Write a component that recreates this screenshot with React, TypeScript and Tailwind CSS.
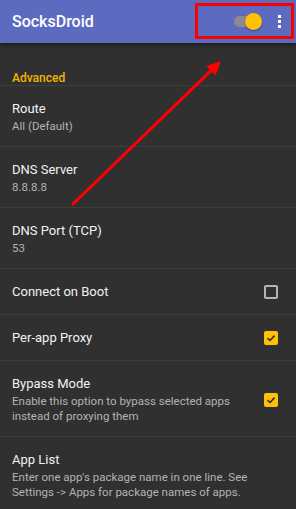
import React from "react";

type Pref = {
  title: string;
  summary?: string;
  checked?: boolean;
};

const prefs: Pref[] = [
  { title: "Route", summary: "All (Default)" },
  { title: "DNS Server", summary: "8.8.8.8" },
  { title: "DNS Port (TCP)", summary: "53" },
  { title: "Connect on Boot", checked: false },
  { title: "Per-app Proxy", checked: true },
  {
    title: "Bypass Mode",
    summary: "Enable this option to bypass selected apps instead of proxying them",
    checked: true,
  },
  {
    title: "App List",
    summary:
      "Enter one app's package name in one line. See Settings -> Apps for package names of apps.",
  },
];

function CheckBox({ checked }: { checked: boolean }) {
  if (!checked) {
    return <div className="w-[14px] h-[14px] rounded-[2px] border-2 border-[#b5b5b5] shrink-0" />;
  }
  return (
    <div className="w-[14px] h-[14px] rounded-[2px] bg-[#ffc107] shrink-0 flex items-center justify-center">
      <svg width="10" height="10" viewBox="0 0 10 10">
        <path d="M1.5 5.2 L4 7.5 L8.6 2.6" fill="none" stroke="#303030" strokeWidth="1.6" />
      </svg>
    </div>
  );
}

function PrefRow({ pref }: { pref: Pref }) {
  const hasBox = pref.checked !== undefined;
  if (!pref.summary) {
    return (
      <div className="h-[46px] flex items-center pl-3 pr-[18px] border-b border-[#3e3e3e]">
        <div className="flex-1 text-[13px] leading-[18px] text-[#f2f2f2]">{pref.title}</div>
        {hasBox && <CheckBox checked={!!pref.checked} />}
      </div>
    );
  }
  return (
    <div className="flex items-center pl-3 pr-[18px] pt-[14px] pb-[12px] border-b border-[#3e3e3e]">
      <div className="flex-1 pr-6">
        <div className="text-[13px] leading-[18px] text-[#f2f2f2]">{pref.title}</div>
        <div className="mt-[1px] text-[11.5px] leading-[15px] text-[#b3b3b3]">{pref.summary}</div>
      </div>
      {hasBox && <CheckBox checked={!!pref.checked} />}
    </div>
  );
}

export default function App() {
  return (
    <div
      className="relative w-[296px] h-[509px] overflow-hidden bg-[#303030]"
      style={{ fontFamily: "Roboto, 'Noto Sans', sans-serif" }}
    >
      <div className="relative z-10 h-[43px] bg-[#5c6bc0] flex items-center pl-3 pr-[15px] shadow-[0_2px_4px_rgba(0,0,0,0.45)]">
        <div className="flex-1 text-[16px] font-medium text-white">SocksDroid</div>
        <div className="relative w-[28px] h-[17px] flex items-center mr-[16px]">
          <div className="w-[26px] h-[11px] rounded-full bg-[#8e8890]" />
          <div className="absolute right-0 top-0 w-[17px] h-[17px] rounded-full bg-[#ffc107] shadow-[0_1px_2px_rgba(0,0,0,0.35)]" />
        </div>
        <div className="flex flex-col gap-[2px]">
          <div className="w-[3px] h-[3px] bg-white" />
          <div className="w-[3px] h-[3px] bg-white" />
          <div className="w-[3px] h-[3px] bg-white" />
        </div>
      </div>

      <div className="pt-[27px] pl-3 h-[43px] text-[12px] leading-[16px] font-medium text-[#f4b400]">
        Advanced
      </div>

      <div className="border-t border-[#3e3e3e] -mt-px" />
      {prefs.map((p) => (
        <PrefRow key={p.title} pref={p} />
      ))}

      <svg className="absolute inset-0 z-20 pointer-events-none" width="296" height="509">
        <rect x="196.5" y="4.5" width="96" height="33" fill="none" stroke="#ff0000" strokeWidth="3" />
        <line x1="73" y1="204" x2="211" y2="70.7" stroke="#ff0000" strokeWidth="3" strokeLinecap="round" />
        <polygon points="221,61 215.5,75.5 206.3,66" fill="#ff0000" />
      </svg>
    </div>
  );
}
